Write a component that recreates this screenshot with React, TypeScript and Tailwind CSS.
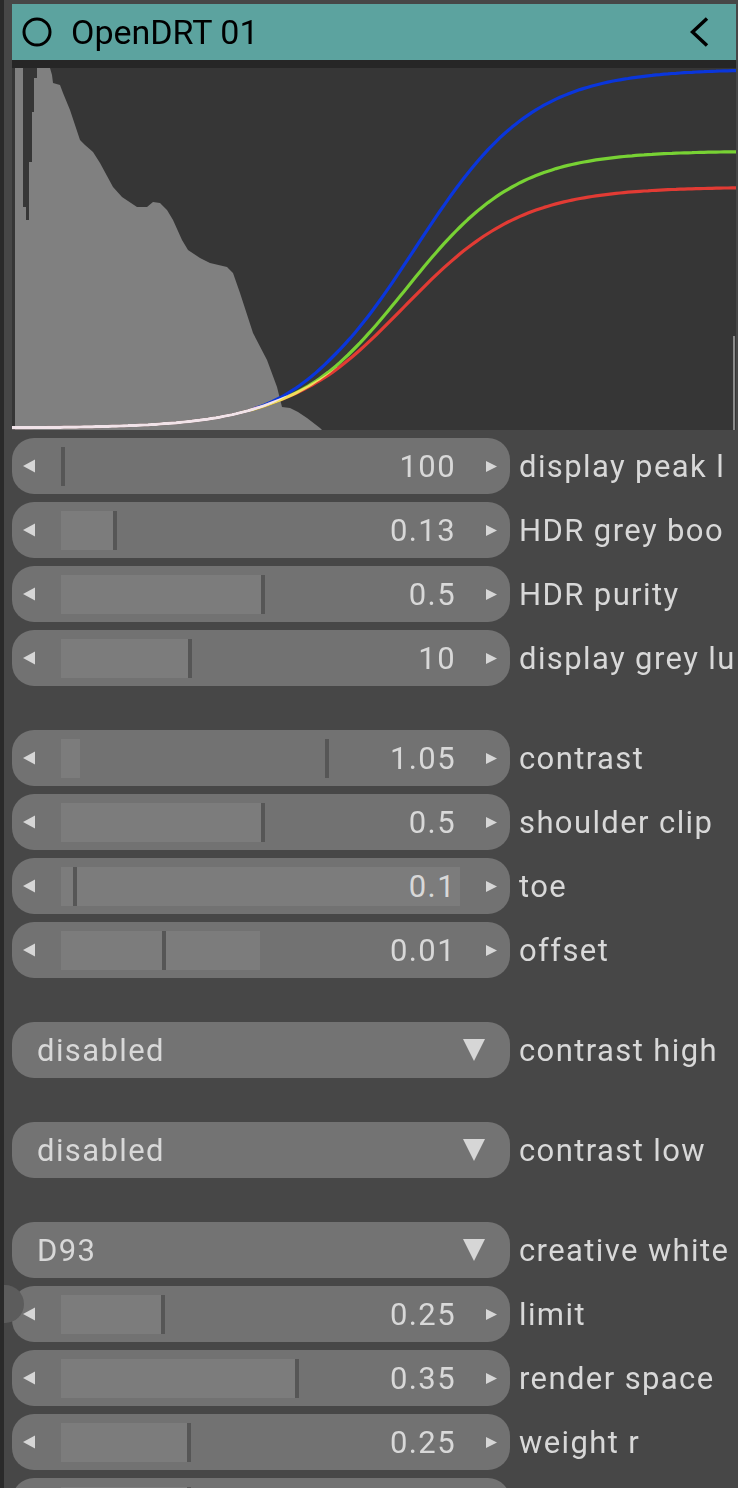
import React from "react";

// OpenDRT node panel: teal header, histogram + tone curves, then slider / dropdown rows.

type Pt = [number, number];

type SliderRow = { kind: "slider"; label: string; value: string; fill: number; handle: number };
type DropdownRow = { kind: "dropdown"; label: string; value: string };
type Row = SliderRow | DropdownRow | { kind: "gap" };

const ROWS: Row[] = [
  { kind: "slider", label: "display peak l", value: "100", fill: 0, handle: 0 },
  { kind: "slider", label: "HDR grey boo", value: "0.13", fill: 52, handle: 52 },
  { kind: "slider", label: "HDR purity", value: "0.5", fill: 200, handle: 200 },
  { kind: "slider", label: "display grey lu", value: "10", fill: 127, handle: 127 },
  { kind: "gap" },
  { kind: "slider", label: "contrast", value: "1.05", fill: 19, handle: 264 },
  { kind: "slider", label: "shoulder clip", value: "0.5", fill: 200, handle: 200 },
  { kind: "slider", label: "toe", value: "0.1", fill: 399, handle: 12 },
  { kind: "slider", label: "offset", value: "0.01", fill: 199, handle: 101 },
  { kind: "gap" },
  { kind: "dropdown", label: "contrast high", value: "disabled" },
  { kind: "gap" },
  { kind: "dropdown", label: "contrast low", value: "disabled" },
  { kind: "gap" },
  { kind: "dropdown", label: "creative white", value: "D93" },
  { kind: "slider", label: "limit", value: "0.25", fill: 100, handle: 100 },
  { kind: "slider", label: "render space", value: "0.35", fill: 234, handle: 234 },
  { kind: "slider", label: "weight r", value: "0.25", fill: 126, handle: 126 },
  // next row is only peeking in at the bottom edge
  { kind: "slider", label: "", value: "", fill: 126, handle: 126 },
];

type Channel = { height: number; centre: number; width: number };
const CHANNELS: Record<"r" | "g" | "b", Channel> = {
  r: { height: 241, centre: 403.5, width: 59 },
  g: { height: 277, centre: 405.5, width: 56 },
  b: { height: 359, centre: 415, width: 59 },
};

function logistic(c: Channel, x: number) {
  return 428 - c.height / (1 + Math.exp(-(x - c.centre) / c.width));
}

// channels share one toe, then split apart from ~240px on
function curve(c: Channel) {
  const pts: Pt[] = [];
  for (let x = 12; x <= 736; x += 4) {
    const shared = (logistic(CHANNELS.r, x) + logistic(CHANNELS.g, x) + logistic(CHANNELS.b, x)) / 3;
    const t = Math.min(1, Math.max(0, (x - 240) / 100));
    const k = t * t * (3 - 2 * t);
    pts.push([x, shared + (logistic(c, x) - shared) * k]);
  }
  return "M" + pts.map((p) => `${p[0]},${p[1].toFixed(1)}`).join(" L");
}

const HISTOGRAM: Pt[] = [
  [15, 430], [15, 68], [23, 68], [23, 207], [26, 207], [26, 220], [29, 220], [29, 162],
  [32, 162], [32, 112], [34, 112], [34, 78], [37, 78], [37, 68], [50, 68], [52, 75],
  [53, 83], [60, 85], [63, 93], [70, 110], [80, 140], [85, 145], [93, 152], [100, 163],
  [113, 187], [122, 197], [137, 207], [147, 207], [153, 202], [160, 203], [167, 210],
  [173, 220], [182, 240], [188, 250], [200, 258], [210, 263], [227, 267], [233, 273],
  [240, 293], [253, 333], [267, 360], [277, 387], [282, 407], [290, 408], [298, 412],
  [307, 418], [320, 428], [322, 430],
];

function CurveView() {
  return (
    <svg className="block h-full w-full" viewBox="12 68 724 362" preserveAspectRatio="none">
      <polygon points={HISTOGRAM.map((p) => p.join(",")).join(" ")} fill="#808080" />
      <rect x="733" y="336" width="2" height="94" fill="#8a8a8a" />
      <g fill="none" strokeWidth="3.2" strokeLinejoin="round" className="isolate">
        <path d={curve(CHANNELS.r)} stroke="#e23b34" className="mix-blend-screen" />
        <path d={curve(CHANNELS.g)} stroke="#78d234" className="mix-blend-screen" />
        <path d={curve(CHANNELS.b)} stroke="#0a36dc" className="mix-blend-screen" />
      </g>
    </svg>
  );
}

function ArrowLeft() {
  return (
    <svg width="14" height="14" viewBox="0 0 14 14">
      <polygon points="13,0.5 13,13.5 1,7" fill="#d6d6d6" />
    </svg>
  );
}

function ArrowRight() {
  return (
    <svg width="13" height="13" viewBox="0 0 13 13">
      <polygon points="1,1 1,12 12,6.5" fill="#d6d6d6" />
    </svg>
  );
}

function Label({ text }: { text: string }) {
  return (
    <div className="ml-[9px] min-w-0 whitespace-nowrap text-[31px] leading-none tracking-[0.045em] text-[#d8d8d8]">
      {text}
    </div>
  );
}

function Slider({ row }: { row: SliderRow }) {
  return (
    <div className="flex h-14 shrink-0 items-center">
      <div className="flex h-14 w-[498px] shrink-0 items-center rounded-[22px] bg-[#727272]">
        <div className="flex w-[49px] shrink-0 pl-[10px]">
          <ArrowLeft />
        </div>
        <div className="relative flex h-[39px] w-[399px] shrink-0 items-center justify-end pr-[4px]">
          <div className="absolute inset-y-0 left-0 bg-[#7c7c7c]" style={{ width: row.fill }} />
          <div className="absolute inset-y-0 w-[4px] bg-[#565656]" style={{ left: row.handle }} />
          {row.value ? (
            <span className="relative text-[31px] leading-none tracking-[0.045em] text-[#d8d8d8]">{row.value}</span>
          ) : null}
        </div>
        <div className="flex flex-1 pl-[25px]">
          <ArrowRight />
        </div>
      </div>
      {row.label ? <Label text={row.label} /> : null}
    </div>
  );
}

function Dropdown({ row }: { row: DropdownRow }) {
  return (
    <div className="flex h-14 shrink-0 items-center">
      <div className="flex h-14 w-[498px] shrink-0 items-center justify-between rounded-[22px] bg-[#737373] pl-[25px] pr-[25px]">
        <span className="text-[31px] leading-none tracking-[0.045em] text-[#d8d8d8]">{row.value}</span>
        <svg width="22" height="22" viewBox="0 0 22 22">
          <polygon points="0,0 22,0 11,22" fill="#d6d6d6" />
        </svg>
      </div>
      <Label text={row.label} />
    </div>
  );
}

export default function App() {
  return (
    <div className="relative h-[1488px] w-[738px] overflow-hidden border-l-4 border-[#2a2a2a] bg-[#474747] pl-2 pr-[2px] font-['Roboto',sans-serif]">
      <div className="pt-1">
        <div className="flex h-14 items-center bg-[#5ca39f] pl-[10px] pr-[26px]">
          <svg width="30" height="30" viewBox="0 0 30 30" className="shrink-0">
            <circle cx="15" cy="15" r="13" fill="none" stroke="#000" strokeWidth="3" />
          </svg>
          <span className="ml-[19px] flex-1 text-[34px] leading-none text-black">OpenDRT 01</span>
          <svg width="20" height="30" viewBox="0 0 20 30" className="shrink-0">
            <polyline points="17,1.5 2.5,15 17,28.5" fill="none" stroke="#000" strokeWidth="3.5" />
          </svg>
        </div>
        <div className="h-2 bg-[#262626]" />
        <div className="h-[362px] bg-[#363636]">
          <CurveView />
        </div>
      </div>

      <div className="flex flex-col gap-2 pt-2">
        {ROWS.map((row, i) => {
          if (row.kind === "gap") return <div key={i} className="h-7 shrink-0" />;
          if (row.kind === "dropdown") return <Dropdown key={i} row={row} />;
          return <Slider key={i} row={row} />;
        })}
      </div>

      {/* grab handle peeking in from the left edge */}
      <div className="absolute left-[-18px] top-[1285px] h-[38px] w-[38px] rounded-full bg-[#5c5c5c]" />
    </div>
  );
}
